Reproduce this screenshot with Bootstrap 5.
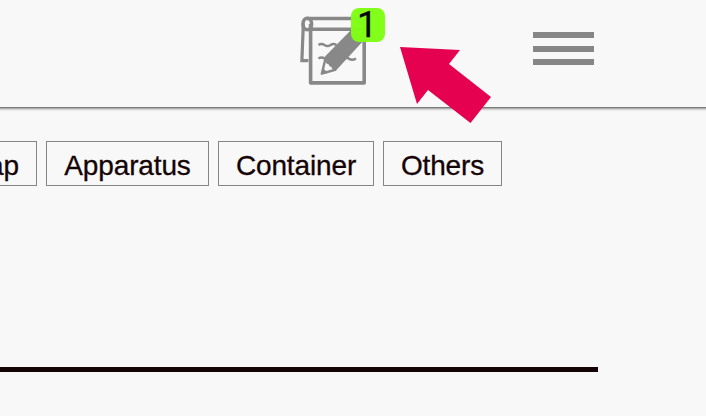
<!DOCTYPE html>
<html lang="en">
<head>
<meta charset="utf-8">
<meta name="viewport" content="width=device-width, initial-scale=1">
<title>Categories</title>
<link href="https://cdn.jsdelivr.net/npm/bootstrap@5.3.0/dist/css/bootstrap.min.css" rel="stylesheet">
<style>
body{background:#f8f8f8;color:#140406;font-family:"Liberation Sans",Arial,sans-serif;height:416px}
.topbar{height:107px;margin:0 -8px;padding:8px 120px 0 0;gap:148px;background:#f8f8f8;box-shadow:0 1px 3px rgba(0,0,0,.8)}
.memo{width:85px;height:80px}
.memo svg{display:block}
.count{width:34px;height:34px;top:0;left:51px;border-radius:8px;background:#80ff14;opacity:.97;color:#000;font-family:Roboto,"Liberation Sans",sans-serif;font-size:36px;line-height:34px;padding-right:2px;-webkit-text-stroke:.3px #000}
.menu-btn{width:61px;height:33px;margin-top:24px;--bs-btn-border-radius:0}
.menu-btn span{display:block;height:6px;background:#868686}
.pointer{left:396px;top:42px;z-index:5}
.tags{margin-top:34px;gap:9px;margin-left:-43px}
.tag{--bs-btn-color:#140406;--bs-btn-border-color:#858585;--bs-btn-border-radius:0;--bs-btn-font-size:28px;--bs-btn-line-height:1;height:45px;letter-spacing:-.14px;padding:5px 0 0;-webkit-text-stroke:.3px #140406}
.w-cap{width:80px;padding-right:7px}.w-app{width:163px}.w-con{width:156px}.w-oth{width:119px}
.rule{width:598px;height:5px;margin-top:181px;background:#140406}
</style>
</head>
<body class="overflow-hidden position-relative">
<header class="topbar d-flex justify-content-end align-items-start">
  <a href="#" class="memo position-relative d-block" aria-label="Memo">
    <svg width="85" height="80" viewBox="300 8 85 80" fill="none" stroke="#888" stroke-width="3.6">
      <path d="M310.600 24v58.900h53.600V18.500H307" stroke-linejoin="round"/>
      <path d="M310 29.300h54"/>
      <ellipse cx="307.300" cy="24" rx="4.300" ry="5.800"/>
      <path d="M303.300 24.500 301.900 60.600h6.500" stroke-width="3.200"/>
      <path d="M318.500 45q3-2.200 6 0t6 0 6 0M318.500 58.500q3-2.200 6 0t5 0M343 58.800q3-2.200 6 0t7-.3" stroke-width="2.400"/>
      <path d="M324.500 57 352 29l13 10L336 70.500 330 65Z" fill="#888" stroke="none"/>
      <path d="M325.500 58.500 321.800 73.700 336 69.500" stroke-width="2.400" stroke-linejoin="round"/>
      <path d="M327 60.500q-1 2.500 2.500 2.500 0 3 3 3 0 3 3 3" stroke-width="2.200"/>
      <path d="m321.500 74 2.500-5 4 4Z" fill="#888" stroke="none"/>
    </svg>
    <span class="count position-absolute d-flex justify-content-center">1</span>
  </a>
  <button class="menu-btn btn border-0 p-0 d-flex flex-column justify-content-between align-items-stretch" aria-label="Menu"><span></span><span></span><span></span></button>
</header>
<svg class="pointer position-absolute" width="100" height="84" viewBox="396 42 100 84" aria-hidden="true"><path d="M400 47 460 50 449 64 491 97 470.500 123 428 90 417 104Z" fill="#e60050"/></svg>
<nav class="tags d-flex">
  <button class="tag w-cap btn">Cap</button>
  <button class="tag w-app btn">Apparatus</button>
  <button class="tag w-con btn">Container</button>
  <button class="tag w-oth btn">Others</button>
</nav>
<div class="rule"></div>
<script src="https://cdn.jsdelivr.net/npm/bootstrap@5.3.0/dist/js/bootstrap.bundle.min.js"></script>
</body>
</html>
